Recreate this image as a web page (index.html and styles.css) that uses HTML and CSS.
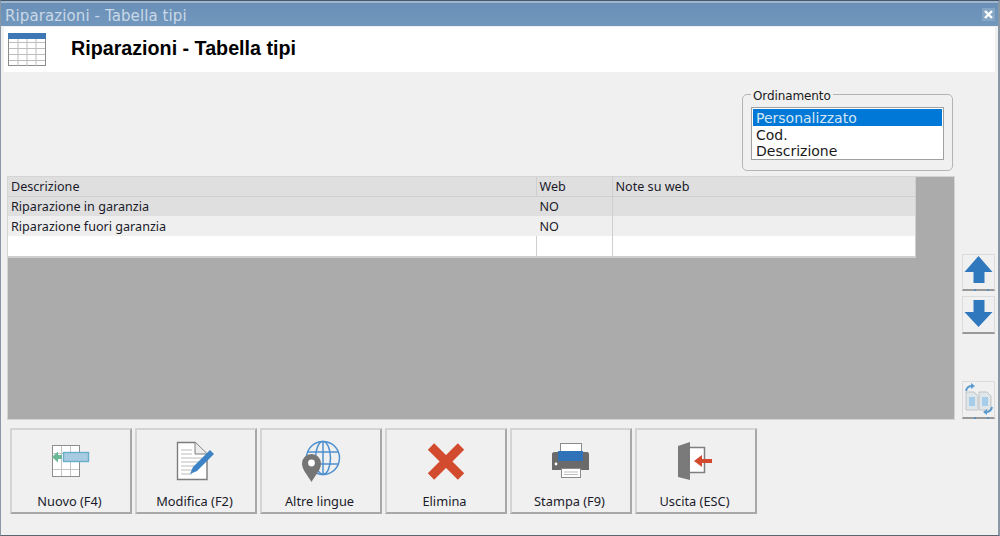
FILE: index.html
```html
<!DOCTYPE html>
<html lang="it">

<head>
    <meta charset="UTF-8">
    <title>Riparazioni - Tabella tipi</title>
    <link rel="stylesheet" href="styles.css">
</head>

<body>
    <div class="window">
        <div class="titlebar">
            <span class="titlebar-text">Riparazioni - Tabella tipi</span>
            <span class="close-btn">
                <svg width="11" height="11" viewBox="0 0 11 11"><path d="M2 2 L9 9 M9 2 L2 9" stroke="#fff" stroke-width="2.4" fill="none"/></svg>
            </span>
        </div>

        <div class="header">
            <svg class="header-icon" width="38" height="34" viewBox="0 0 38 34">
                <rect x="0.5" y="0.5" width="37" height="32" fill="#fff" stroke="#8c8c8c"/>
                <path d="M1 9.5 H37 M1 15.5 H37 M1 21.5 H37 M1 27.5 H37 M10 6 V33 M19 6 V33 M28 6 V33" stroke="#bdbdbd" fill="none"/>
                <rect x="0" y="0" width="38" height="6" fill="#3d78b4"/>
            </svg>
            <h1 class="header-title">Riparazioni - Tabella tipi</h1>
        </div>

        <div class="main">
            <div class="sort-row">
                <fieldset class="sort-box">
                    <legend>Ordinamento</legend>
                    <div class="listbox">
                        <div class="listbox-item selected">Personalizzato</div>
                        <div class="listbox-item">Cod.</div>
                        <div class="listbox-item">Descrizione</div>
                    </div>
                </fieldset>
            </div>

            <div class="content">
                <div class="grid">
                    <table class="grid-table">
                        <colgroup>
                            <col class="col-desc">
                            <col class="col-web">
                            <col class="col-note">
                        </colgroup>
                        <tr class="row-head">
                            <td>Descrizione</td>
                            <td>Web</td>
                            <td>Note su web</td>
                        </tr>
                        <tr class="row-first">
                            <td>Riparazione in garanzia</td>
                            <td>NO</td>
                            <td></td>
                        </tr>
                        <tr class="row-second">
                            <td>Riparazione fuori garanzia</td>
                            <td>NO</td>
                            <td></td>
                        </tr>
                        <tr class="row-empty">
                            <td></td>
                            <td></td>
                            <td></td>
                        </tr>
                    </table>
                </div>

                <div class="side">
                    <button class="side-btn btn-up" type="button">
                        <svg width="29" height="28" viewBox="0 0 29 28"><path d="M14.5 0 L28.5 16 H20.5 V27 H9.5 V16 H0.5 Z" fill="#2f78bd"/></svg>
                    </button>
                    <button class="side-btn btn-down" type="button">
                        <svg width="29" height="28" viewBox="0 0 29 28"><path d="M9.5 0 H20.5 V12 H28.5 L14.5 27 L0.5 12 H9.5 Z" fill="#2f78bd"/></svg>
                    </button>
                    <button class="side-btn btn-swap" type="button">
                        <svg width="31" height="32" viewBox="0 0 31 32">
                            <path d="M3 9 H11 L15 13 V27 H3 Z" fill="#dfe6ea" stroke="#c4c4c4"/>
                            <path d="M16 9 H24 L28 13 V27 H16 Z" fill="#dfe6ea" stroke="#c4c4c4"/>
                            <rect x="6" y="14" width="6" height="9" fill="#a5cdea"/>
                            <rect x="19" y="14" width="6" height="9" fill="#a5cdea"/>
                            <path d="M3 8 Q4 3 9 3" stroke="#5b9bd0" stroke-width="2" fill="none"/>
                            <path d="M8 0 L12 3 L8 6 Z" fill="#5b9bd0"/>
                            <path d="M29 24 Q28 29 23 29" stroke="#5b9bd0" stroke-width="2" fill="none"/>
                            <path d="M24 26 L20 29 L24 32 Z" fill="#5b9bd0"/>
                        </svg>
                    </button>
                </div>
            </div>

            <div class="toolbar">
                <button class="tool-btn" type="button">
                    <svg class="tool-icon" width="44" height="44" viewBox="0 0 44 44">
                        <rect x="3.5" y="6.5" width="27" height="31" fill="#fff" stroke="#8e8e8e"/>
                        <path d="M4 14.5 H30 M4 30.5 H30 M12.5 7 V37 M21.5 7 V37" stroke="#c4c4c4" fill="none"/>
                        <rect x="14.5" y="13.5" width="25" height="9" fill="#a9cbe2" stroke="#67aecb" stroke-width="1.4"/>
                        <path d="M13 16 H9 V12.5 L3 18 L9 23.5 V20 H13 Z" fill="#6bb896"/>
                    </svg>
                    <span class="tool-label">Nuovo (F4)</span>
                </button>
                <button class="tool-btn" type="button">
                    <svg class="tool-icon" width="44" height="44" viewBox="0 0 44 44">
                        <path d="M3.5 3.5 H21 L33 15 V40.5 H3.5 Z" fill="#fff" stroke="#7d7d7d" stroke-width="1.4"/>
                        <path d="M21 3.5 V15 H33" fill="#eee" stroke="#7d7d7d"/>
                        <path d="M7 11 H18 M7 15 H18 M7 19 H28 M7 23 H28 M7 27 H24 M7 31 H20 M7 35 H18" stroke="#bcbcbc" fill="none"/>
                        <path d="M36 11 L40 15 L23 32 L16 35 L19 28 Z" fill="#3d83c6"/>
                    </svg>
                    <span class="tool-label">Modifica (F2)</span>
                </button>
                <button class="tool-btn" type="button">
                    <svg class="tool-icon" width="44" height="44" viewBox="0 0 44 44">
                        <g fill="none" stroke="#4d90cf" stroke-width="1.5">
                            <circle cx="24" cy="19" r="16.5"/>
                            <ellipse cx="24" cy="19" rx="7.5" ry="16.5"/>
                            <path d="M24 2.5 V35.5 M8.5 13 H39.5 M8.5 25 H39.5"/>
                        </g>
                        <path d="M12.5 43 C8 35 3 31 3 24.5 A9.5 9.5 0 0 1 22 24.5 C22 31 17 35 12.5 43 Z" fill="#757575"/>
                        <circle cx="12.5" cy="24" r="3.4" fill="#fff"/>
                    </svg>
                    <span class="tool-label">Altre lingue</span>
                </button>
                <button class="tool-btn" type="button">
                    <svg class="tool-icon" width="44" height="44" viewBox="0 0 44 44">
                        <path d="M7 7.5 L37 37.5 M37 7.5 L7 37.5" stroke="#d34b2f" stroke-width="9" fill="none"/>
                    </svg>
                    <span class="tool-label">Elimina</span>
                </button>
                <button class="tool-btn" type="button">
                    <svg class="tool-icon" width="44" height="44" viewBox="0 0 44 44">
                        <rect x="11.5" y="4.5" width="21" height="10" fill="#fff" stroke="#8a8a8a"/>
                        <path d="M6 13 H38 Q40 13 40 15 V31 H3 V15 Q3 13 6 13 Z" fill="#6a6a6a"/>
                        <rect x="9" y="12" width="25" height="10" fill="#2f72b8"/>
                        <rect x="12.5" y="29.5" width="19" height="9" fill="#fff" stroke="#8a8a8a"/>
                        <path d="M15 33 H29 M15 35.5 H29" stroke="#bdbdbd" fill="none"/>
                        <circle cx="7" cy="25" r="1.4" fill="#fff"/>
                    </svg>
                    <span class="tool-label">Stampa (F9)</span>
                </button>
                <button class="tool-btn" type="button">
                    <svg class="tool-icon" width="44" height="44" viewBox="0 0 44 44">
                        <path d="M16 8.5 H30.5 V33.5 H16" fill="#fff" stroke="#7e7e7e" stroke-width="1.5"/>
                        <path d="M4 7 L16 3 V41 L4 38 Z" fill="#7a7a7a"/>
                        <path d="M38 20 H28 V16 L20 22 L28 28 V24 H38 Z" fill="#d2492d"/>
                    </svg>
                    <span class="tool-label">Uscita (ESC)</span>
                </button>
            </div>
        </div>
    </div>
</body>

</html>
```

FILE: styles.css
```css
html,
body {
    margin: 0;
    padding: 0;
}

body {
    width: 1000px;
    height: 536px;
    overflow: hidden;
    font-family: "Noto Sans", sans-serif;
    background-color: #f0f0f0;
}

.window {
    width: 1000px;
    height: 536px;
    box-sizing: border-box;
    display: flex;
    flex-direction: column;
    background-color: #f0f0f0;
    border-top: 1px solid #44586e;
    border-left: 1px solid #8a97a5;
    border-right: 2px solid #8a97a5;
    border-bottom: 1px solid #5c6670;
}

.titlebar {
    height: 25px;
    flex: none;
    box-sizing: border-box;
    padding: 3px 3px 0 4px;
    display: flex;
    align-items: center;
    justify-content: space-between;
    background: linear-gradient(#6a90b8, #7197bd);
    border-top: 2px solid #a0b6cc;
}

.titlebar-text {
    font-family: "DejaVu Sans", sans-serif;
    font-size: 15px;
    letter-spacing: 0.1px;
    color: #c9d8e6;
    white-space: nowrap;
}

.close-btn {
    width: 13px;
    height: 13px;
    margin-top: -3px;
    display: flex;
    align-items: center;
    justify-content: center;
    background-color: #86a6c6;
}

.header {
    height: 45px;
    flex: none;
    margin: 1px 3px 0;
    display: flex;
    align-items: center;
    background-color: #fff;
}

.header-icon {
    margin-left: 4px;
}

.header-title {
    margin: 0 0 2px 25px;
    font-family: "Liberation Sans", sans-serif;
    font-size: 19.7px;
    font-weight: bold;
    color: #000;
    white-space: nowrap;
}

.main {
    flex: 1;
    display: flex;
    flex-direction: column;
    min-height: 0;
}

.sort-row {
    display: flex;
    justify-content: flex-end;
    height: 104px;
    box-sizing: border-box;
    padding: 14px 45px 0 0;
}

.sort-box {
    margin: 0;
    padding: 0 8px;
    width: 211px;
    height: 85px;
    box-sizing: border-box;
    border: 1px solid #b4b4b4;
    border-radius: 5px;
}

.sort-box legend {
    padding: 3px 2px 0;
    margin-left: 0;
    font-family: "DejaVu Sans", sans-serif;
    font-size: 12px;
    letter-spacing: -0.1px;
    color: #1a1a1a;
}

.listbox {
    height: 53px;
    box-sizing: border-box;
    margin-top: 4px;
    padding: 1px;
    border: 1px solid #a0a0a0;
    background-color: #fff;
    font-family: "DejaVu Sans", sans-serif;
    font-size: 14px;
    color: #1a1a1a;
}

.listbox-item {
    height: 16.5px;
    line-height: 19px;
    padding-left: 3px;
}

.listbox-item.selected {
    background-color: #0078d7;
    color: #d5e6f5;
}

.content {
    display: flex;
    height: 244px;
    flex: none;
    margin-left: 6px;
}

.grid {
    width: 948px;
    flex: none;
    box-sizing: border-box;
    border: 1px solid #d4d4d4;
    background-color: #ababab;
}

.grid-table {
    width: 908px;
    border-collapse: collapse;
    table-layout: fixed;
    font-size: 12.6px;
    color: #1a1a2a;
}

.col-desc {
    width: 528px;
}

.col-web {
    width: 76px;
}

.grid-table td {
    padding: 0 3px;
    height: 20px;
    box-sizing: border-box;
    white-space: nowrap;
    border-left: 1px solid #cfcfcf;
    border-right: 1px solid #cfcfcf;
}

.grid-table td:first-child {
    border-left: none;
}

.row-head td {
    background-color: #dfdfdf;
    border-bottom: 1px solid #cfcfcf;
    height: 19px;
}

.row-first td {
    background-color: #dfdfdf;
}

.row-first td:first-child {
    border-right-color: #dfdfdf;
}

.row-second td {
    background-color: #efefef;
}

.row-second td:first-child {
    border-right-color: #efefef;
}

.row-empty td {
    background-color: #fff;
    height: 21px;
    border-bottom: 2px solid #cfcfcf;
}

.side {
    width: 33px;
    margin-left: 7px;
    padding-top: 78px;
    display: flex;
    flex-direction: column;
}

.side-btn {
    position: relative;
    width: 33px;
    padding: 0;
    display: flex;
    align-items: flex-start;
    justify-content: center;
    box-sizing: border-box;
    background-color: #f0f0f0;
    border: 1px solid #dcdcdc;
    border-bottom: 2px solid #999;
}

/* small marks under the line of the up and swap buttons */
.btn-up::after,
.btn-swap::after {
    content: "";
    position: absolute;
    left: 11px;
    bottom: -2px;
    width: 2px;
    height: 2px;
    background-color: #5b8fbf;
    box-shadow: 13px 0 #5b8fbf;
}

.btn-up {
    height: 37px;
    padding-top: 1px;
}

.btn-down {
    height: 38px;
    margin-top: 5px;
    padding-top: 3px;
}

.btn-swap {
    height: 38px;
    margin-top: 47px;
    padding-top: 1px;
}

.toolbar {
    display: flex;
    gap: 3px;
    margin: 8px 0 0 9px;
}

.tool-btn {
    width: 122px;
    height: 86px;
    padding: 0;
    box-sizing: border-box;
    display: flex;
    flex-direction: column;
    align-items: center;
    background-color: #f0f0f0;
    border: 2px solid #a8a8a8;
    border-top-color: #d4d4d4;
    border-left-color: #d4d4d4;
    font-family: "Noto Sans", sans-serif;
}

.tool-icon {
    margin-top: 9px;
    flex: none;
}

.tool-label {
    margin-top: 9px;
    padding-right: 3px;
    font-size: 12.8px;
    line-height: 18px;
    color: #1a1a2a;
}
```
